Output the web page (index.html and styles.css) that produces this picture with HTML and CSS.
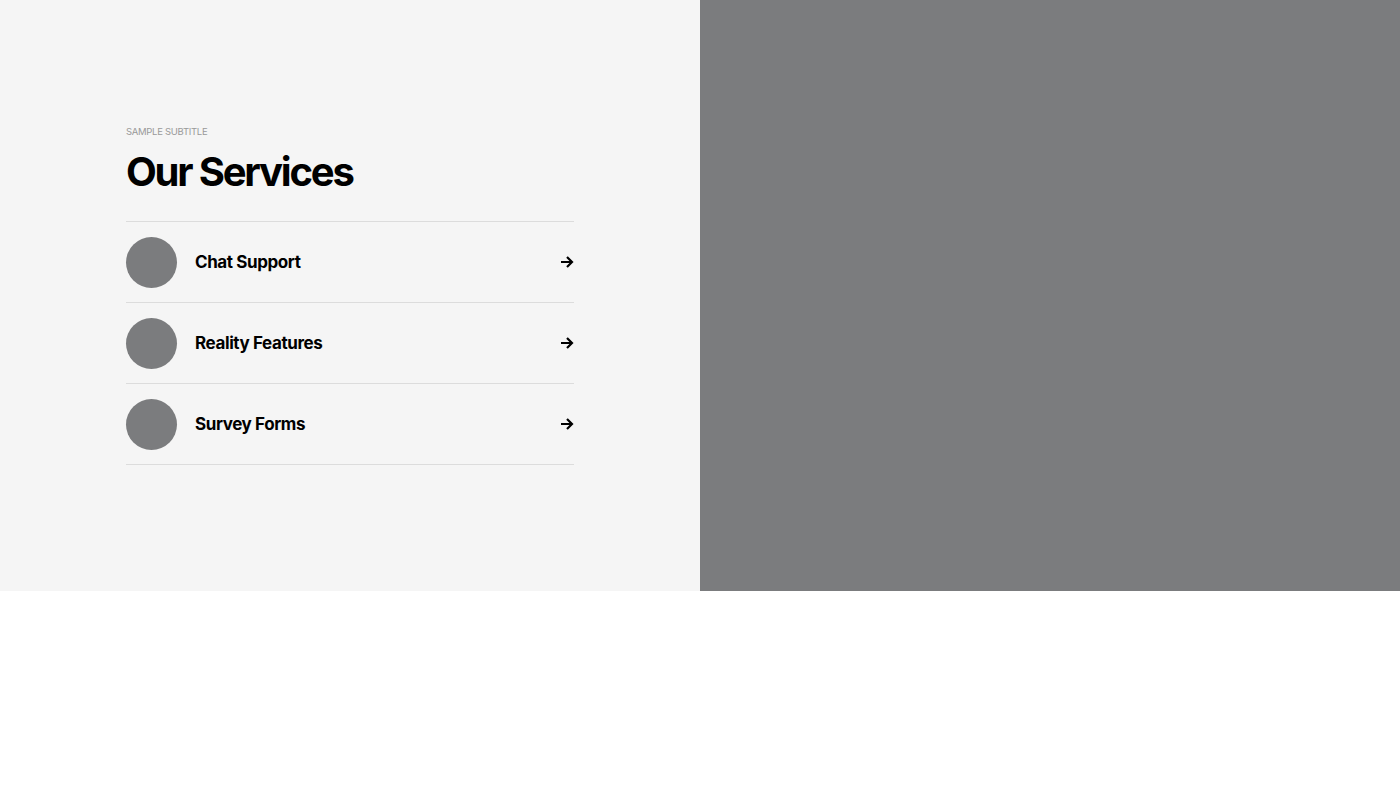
FILE: index.html
```html
<!DOCTYPE html>
<html lang="en">
<head>
    <meta charset="UTF-8">
    <meta name="viewport" content="width=device-width, initial-scale=1.0">
    <title>Our Services</title>
    <link rel="stylesheet" href="styles.css">
</head>
<body>
    <section class="services">
        <div class="services-text">
            <div class="services-inner">
                <p class="subtitle">Sample Subtitle</p>
                <h1 class="title">Our Services</h1>

                <ul class="service-list">
                    <li class="service-item">
                        <span class="service-icon"></span>
                        <span class="service-name">Chat Support</span>
                        <svg class="arrow" width="14" height="14" viewBox="0 0 14 14"><path d="M1 7h11M7 2l5 5-5 5" fill="none" stroke="#000" stroke-width="2.2"/></svg>
                    </li>
                    <li class="service-item">
                        <span class="service-icon"></span>
                        <span class="service-name">Reality Features</span>
                        <svg class="arrow" width="14" height="14" viewBox="0 0 14 14"><path d="M1 7h11M7 2l5 5-5 5" fill="none" stroke="#000" stroke-width="2.2"/></svg>
                    </li>
                    <li class="service-item">
                        <span class="service-icon"></span>
                        <span class="service-name">Survey Forms</span>
                        <svg class="arrow" width="14" height="14" viewBox="0 0 14 14"><path d="M1 7h11M7 2l5 5-5 5" fill="none" stroke="#000" stroke-width="2.2"/></svg>
                    </li>
                </ul>
            </div>
        </div>
        <div class="services-image"></div>
    </section>
</body>
</html>
```

FILE: styles.css
```css
* {
    margin: 0;
    padding: 0;
    box-sizing: border-box;
}

body {
    font-family: 'Inter', 'Liberation Sans', sans-serif;
    color: #000;
    background: #fff;
}

.services {
    display: flex;
    height: 591px;
}

.services-text {
    width: 50%;
    background: #f5f5f5;
    display: flex;
    align-items: center;
    padding: 0 126px;
}

.services-inner {
    width: 100%;
}

.services-image {
    width: 50%;
    background: #7b7c7e;
}

.subtitle {
    font-size: 9.5px;
    text-transform: uppercase;
    color: #999;
    letter-spacing: -0.3px;
    margin-bottom: 12px;
}

.title {
    font-size: 40px;
    font-weight: 700;
    letter-spacing: -2.2px;
    line-height: 1.15;
    margin-bottom: 26px;
}

.service-list {
    list-style: none;
    border-top: 1px solid #dcdcdc;
}

.service-item {
    display: flex;
    align-items: center;
    height: 81px;
    border-bottom: 1px solid #dcdcdc;
}

.service-icon {
    width: 51px;
    height: 51px;
    border-radius: 50%;
    background: #7b7c7e;
    flex-shrink: 0;
}

.service-name {
    flex: 1;
    margin-left: 18px;
    font-size: 17px;
    font-weight: 700;
    letter-spacing: -0.4px;
}

.arrow {
    flex-shrink: 0;
}
```
